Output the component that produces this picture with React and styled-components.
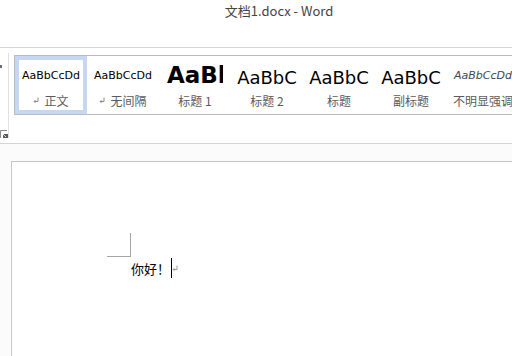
import styled, { createGlobalStyle } from 'styled-components';

const GlobalStyle = createGlobalStyle`
  html, body {
    margin: 0;
    padding: 0;
    background: #ffffff;
    overflow: hidden;
  }
  body {
    width: 512px;
    height: 356px;
    font-family: "Noto Sans CJK SC", "DejaVu Sans", sans-serif;
  }
`;

const Window = styled.div`
  display: flex;
  flex-direction: column;
  width: 512px;
  height: 356px;
  overflow: hidden;
`;

const TitleBar = styled.div`
  height: 22px;
  line-height: 22px;
  padding-left: 46px;
  text-align: center;
  font-size: 13px;
  color: #444444;
`;

const TabStrip = styled.div`
  height: 25px;
  border-bottom: 1px solid #d6d6d6;
`;

const Ribbon = styled.div`
  display: flex;
  height: 95px;
  border-bottom: 1px solid #d4d4d4;
  flex-shrink: 0;
`;

const GroupEdge = styled.div`
  display: flex;
  flex-direction: column;
  justify-content: space-between;
  width: 11px;
  height: 85px;
  margin-top: 5px;
  border-right: 1px solid #e1e1e1;
  box-sizing: border-box;
  padding: 12px 0 0;
`;

const ScrollMark = styled.div`
  width: 2px;
  height: 3px;
  background: #6a6a6a;
`;

const Gallery = styled.div`
  display: flex;
  flex-shrink: 0;
  width: 540px;
  height: 58px;
  margin: 7px 0 0 5px;
  border: 1px solid #bcbcbc;
  border-right: none;
  background: #ffffff;
`;

const StyleItem = styled.div`
  flex-shrink: 0;
  width: 72px;
  height: 58px;
  box-sizing: border-box;
  border: 4px solid ${(p) => (p.$selected ? '#c5d7f1' : 'transparent')};
  display: flex;
  flex-direction: column;
`;

const Sample = styled.div`
  height: 31px;
  line-height: 31px;
  box-sizing: border-box;
  margin: 0 ${(p) => (p.$inset ? 4 : 0)}px;
  padding-top: ${(p) => (p.$up < 0 ? -p.$up : 0)}px;
  padding-bottom: ${(p) => (p.$up > 0 ? p.$up : 0)}px;
  overflow: hidden;
  white-space: nowrap;
  text-align: center;
  font-family: "DejaVu Sans", sans-serif;
  font-size: ${(p) => p.$size}px;
  font-weight: ${(p) => (p.$bold ? 700 : 400)};
  font-style: ${(p) => (p.$italic ? 'italic' : 'normal')};
  color: ${(p) => (p.$italic ? '#3c4656' : '#000000')};
`;

const Label = styled.div`
  display: flex;
  justify-content: center;
  align-items: center;
  gap: 5px;
  height: 19px;
  white-space: nowrap;
  overflow: hidden;
  font-size: 12px;
  color: #5b5b5b;
`;

const DocArea = styled.div`
  flex: 1;
  background: #fbfbfb;
  padding: 17px 0 0 11px;
`;

const Page = styled.div`
  height: 100%;
  background: #ffffff;
  border-top: 1px solid #c6c6c6;
  border-left: 1px solid #c6c6c6;
  padding: 95px 0 0 119px;
  box-sizing: border-box;
`;

const TextBlock = styled.div`
  position: relative;
  display: flex;
  align-items: center;
  height: 22px;
  font-size: 13px;
  color: #000000;

  &::before {
    content: '';
    position: absolute;
    left: -24px;
    top: -24px;
    width: 23px;
    height: 23px;
    border-right: 1px solid #a6a6a6;
    border-bottom: 1px solid #a6a6a6;
  }
`;

const Caret = styled.span`
  display: inline-block;
  width: 1px;
  height: 20px;
  margin-left: 1px;
  background: #000000;
`;

const ReturnMark = ({ color = '#8a8a8a' }) => (
  <svg width="6" height="7" viewBox="0 0 6 7">
    <path d="M5 0.5V4.5H1.5" fill="none" stroke={color} strokeWidth="1" />
    <path d="M0.5 4.5L2.5 2.8V6.2Z" fill={color} />
  </svg>
);

const Launcher = () => (
  <svg width="8" height="8" viewBox="0 0 8 8">
    <path d="M0.5 8V0.5H7" fill="none" stroke="#8a8a8a" strokeWidth="1" />
    <rect x="3" y="4" width="5" height="4" fill="#5a5a5a" />
    <path d="M3 4L6 7" stroke="#ffffff" strokeWidth="0.8" />
  </svg>
);

const styles = [
  { sample: 'AaBbCcDd', label: '正文', size: 11, mark: true, selected: true, up: 0 },
  { sample: 'AaBbCcDd', label: '无间隔', size: 11, mark: true, up: 0 },
  { sample: 'AaBb', label: '标题 1', size: 23, bold: true, up: 5, inset: true },
  { sample: 'AaBbC', label: '标题 2', size: 18, up: -2 },
  { sample: 'AaBbC', label: '标题', size: 18, up: -2 },
  { sample: 'AaBbC', label: '副标题', size: 18, up: -2 },
  { sample: 'AaBbCcDd', label: '不明显强调', size: 11, italic: true, up: 0 },
];

const App = () => {
  return (
    <Window>
      <GlobalStyle />
      <TitleBar>文档1.docx - Word</TitleBar>
      <TabStrip />
      <Ribbon>
        <GroupEdge>
          <ScrollMark />
          <Launcher />
        </GroupEdge>
        <Gallery>
          {styles.map((s) => (
            <StyleItem key={s.label} $selected={s.selected}>
              <Sample
                $size={s.size}
                $bold={s.bold}
                $italic={s.italic}
                $up={s.up}
                $inset={s.inset}
              >
                {s.sample}
              </Sample>
              <Label>
                {s.mark && <ReturnMark />}
                <span>{s.label}</span>
              </Label>
            </StyleItem>
          ))}
        </Gallery>
      </Ribbon>
      <DocArea>
        <Page>
          <TextBlock>
            你好！
            <Caret />
            <ReturnMark color="#9a9a9a" />
          </TextBlock>
        </Page>
      </DocArea>
    </Window>
  );
};

export default App;
